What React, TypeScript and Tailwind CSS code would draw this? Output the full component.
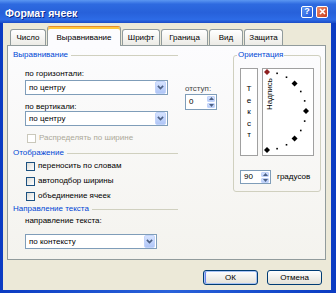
import React from "react";

function Chevron() {
  return (
    <svg width="7" height="5" viewBox="0 0 7 5">
      <path d="M0.9 0.9 L3.5 3.5 L6.1 0.9" fill="none" stroke="#4d6185" strokeWidth="1.7" />
    </svg>
  );
}

function Select({ value, w }: { value: string; w: string }) {
  return (
    <div className={`${w} h-[15px] bg-white border border-[#7f9db9] flex items-center`}>
      <span className="flex-1 pl-[3px] leading-[10px]">{value}</span>
      <div className="w-[11px] h-[13px] mr-px rounded-[2px] bg-gradient-to-b from-[#d6e3fe] to-[#b0c6f7] border border-[#c2d3fa] flex items-center justify-center">
        <Chevron />
      </div>
    </div>
  );
}

function Arrow({ up }: { up?: boolean }) {
  return (
    <svg width="5" height="3" viewBox="0 0 5 3">
      {up ? <path d="M0 3 L2.5 0 L5 3 Z" fill="#4d6185" /> : <path d="M0 0 L2.5 3 L5 0 Z" fill="#4d6185" />}
    </svg>
  );
}

function Spin({ value, w, h }: { value: string; w: string; h: string }) {
  return (
    <div className={`${w} ${h} bg-white border border-[#7f9db9] flex`}>
      <span className="flex-1 pl-[3px] flex items-center">{value}</span>
      <div className="w-[10px] flex flex-col p-px gap-px">
        <div className="flex-1 rounded-[1px] bg-gradient-to-b from-[#d6e3fe] to-[#b8cdf8] border border-[#c2d3fa] flex items-center justify-center">
          <Arrow up />
        </div>
        <div className="flex-1 rounded-[1px] bg-gradient-to-b from-[#d6e3fe] to-[#b8cdf8] border border-[#c2d3fa] flex items-center justify-center">
          <Arrow />
        </div>
      </div>
    </div>
  );
}

function Header({ label, mt }: { label: string; mt: string }) {
  return (
    <div className={`${mt} ml-[5px] w-[165px] h-[10px] flex items-center`}>
      <span className="text-[#0046d5] whitespace-nowrap">{label}</span>
      <div className="flex-1 h-px bg-[#d0d0bf] ml-[3px] mt-px" />
    </div>
  );
}

function Check({ label, mt, disabled }: { label: string; mt: string; disabled?: boolean }) {
  return (
    <div className={`${mt} ${disabled ? "ml-[19px]" : "ml-[18px]"} h-[10px] flex items-center`}>
      <span
        className={
          disabled
            ? "w-[9px] h-[9px] border border-[#cac8bb] bg-white"
            : "w-[9px] h-[9px] border border-[#1c5180] bg-gradient-to-br from-[#dcdcd7] to-white"
        }
      />
      <span className={`ml-[3px] whitespace-nowrap ${disabled ? "text-[#aca899]" : ""}`}>{label}</span>
    </div>
  );
}

function Tab({ label, w, active, ml }: { label: string; w: string; active?: boolean; ml: string }) {
  if (active) {
    return (
      <div
        className={`${w} ${ml} h-[20px] -mb-px relative z-10 bg-[#fcfcfe] border border-b-0 border-[#919b9c] border-t-[#e68b2c] rounded-t-[3px] shadow-[inset_0_2px_#ffc83c] flex items-center justify-center pt-[2px]`}
      >
        {label}
      </div>
    );
  }
  return (
    <div
      className={`${w} ${ml} h-[16px] border border-b-0 border-[#919b9c] rounded-t-[3px] bg-gradient-to-b from-white to-[#ecebe6] flex items-center justify-center`}
    >
      {label}
    </div>
  );
}

function Dial() {
  const angles = [90, 75, 60, 45, 30, 15, 0, -15, -30, -45, -60, -75, -90];
  return (
    <svg width="50" height="86" viewBox="0 0 50 86">
      {angles.map((a) => {
        const x = 4 + 39 * Math.cos((a * Math.PI) / 180);
        const y = 42 - 39 * Math.sin((a * Math.PI) / 180);
        if (a % 45 === 0) {
          const c = a === 90 ? "#8e1f1f" : "#000";
          return (
            <polygon
              key={a}
              points={`${x},${y - 3} ${x + 3},${y} ${x},${y + 3} ${x - 3},${y}`}
              fill={c}
            />
          );
        }
        return <rect key={a} x={x - 0.8} y={y - 0.8} width="1.6" height="1.6" fill="#000" />;
      })}
      <text
        transform="translate(9,41) rotate(-90)"
        fontSize="8"
        fontFamily="'Liberation Sans', Arial, sans-serif"
        fill="#000"
      >
        Надпись
      </text>
    </svg>
  );
}

export default function App() {
  return (
    <div className="w-[336px] h-[297px] bg-white overflow-hidden font-['Liberation_Sans',Arial,sans-serif] text-[8px] leading-[10px] text-black">
      <div className="w-[336px] h-[293px] bg-gradient-to-r from-[#0b3bc2] via-[#2a62da] to-[#0b3bc2] flex flex-col">
        {/* title bar */}
        <div className="h-[23px] flex items-center pl-[5px] pr-[8px] bg-[linear-gradient(180deg,#5b97f2_0%,#2e6ae0_18%,#2761da_55%,#2d6be6_85%,#1b4cc6_100%)]">
          <span className="flex-1 text-white font-bold text-[10.5px] leading-[12px] pt-[2px] [text-shadow:1px_1px_#0c2a8a]">
            Формат ячеек
          </span>
          <div className="w-[12px] h-[12px] rounded-[2px] border border-white bg-gradient-to-br from-[#5b93f5] to-[#1f56d8] flex items-center justify-center text-white font-bold text-[9px] leading-none">
            ?
          </div>
          <div className="ml-[3px] w-[12px] h-[12px] rounded-[2px] border border-white bg-gradient-to-br from-[#ec8a6a] to-[#c73d1c] flex items-center justify-center">
            <svg width="7" height="7" viewBox="0 0 7 7">
              <path d="M1 1 L6 6 M6 1 L1 6" stroke="#fff" strokeWidth="1.6" />
            </svg>
          </div>
        </div>
        {/* body */}
        <div className="ml-[3px] w-[328px] h-[267px] bg-[#ece9d8] flex flex-col">
          {/* tabs */}
          <div className="h-[22px] flex items-end">
            <Tab label="Число" w="w-[36px]" ml="ml-[7px]" />
            <Tab label="Выравнивание" w="w-[74px]" ml="ml-[1px]" active />
            <Tab label="Шрифт" w="w-[38px]" ml="ml-[1px]" />
            <Tab label="Граница" w="w-[47px]" ml="ml-[1px]" />
            <Tab label="Вид" w="w-[34px]" ml="ml-[1px]" />
            <Tab label="Защита" w="w-[39px]" ml="ml-[1px]" />
          </div>
          {/* panel */}
          <div className="ml-[4px] w-[319px] h-[215px] border border-[#919b9c] bg-gradient-to-b from-[#fcfcfe] to-[#f4f3ee] flex">
            <div className="w-[225px] flex flex-col">
              <Header label="Выравнивание" mt="mt-[4px]" />
              <div className="mt-[9px] flex">
                <div className="ml-[17px] w-[143px] flex flex-col">
                  <div className="h-[10px] whitespace-nowrap">по горизонтали:</div>
                  <div className="mt-[1px]">
                    <Select value="по центру" w="w-[143px]" />
                  </div>
                  <div className="mt-[7px] h-[10px] whitespace-nowrap">по вертикали:</div>
                  <div className="-mt-px">
                    <Select value="по центру" w="w-[143px]" />
                  </div>
                </div>
                <div className="ml-[17px] flex flex-col">
                  <div className="mt-[15px] h-[10px] text-[#444]">отступ:</div>
                  <Spin value="0" w="w-[32px]" h="h-[16px]" />
                </div>
              </div>
              <Check label="Распределять по ширине" mt="mt-[7px]" disabled />
              <Header label="Отображение" mt="mt-[5px]" />
              <Check label="переносить по словам" mt="mt-[3px]" />
              <Check label="автоподбор ширины" mt="mt-[5px]" />
              <Check label="объединение ячеек" mt="mt-[5px]" />
              <Header label="Направление текста" mt="mt-[3px]" />
              <div className="mt-[2px] ml-[17px] h-[10px] whitespace-nowrap">направление текста:</div>
              <div className="mt-[8px] ml-[17px]">
                <Select value="по контексту" w="w-[132px]" />
              </div>
            </div>
            <fieldset className="mt-[4px] w-[88px] h-[142px] border border-[#d0d0bf] rounded-[3px]">
              <legend className="ml-[3px] px-[1px] text-[#0046d5] leading-[10px]">Ориентация</legend>
              <div className="mt-[8px] ml-[6px] flex">
                <div className="w-[18px] h-[88px] bg-white border border-[#a0a0a0] flex flex-col items-center justify-center leading-[11.5px]">
                  <span>Т</span>
                  <span>е</span>
                  <span>к</span>
                  <span>с</span>
                  <span>т</span>
                </div>
                <div className="ml-[4px] w-[52px] h-[88px] bg-white border border-[#a0a0a0]">
                  <Dial />
                </div>
              </div>
              <div className="mt-[14px] ml-[6px] flex items-center">
                <Spin value="90" w="w-[31px]" h="h-[14px]" />
                <span className="ml-[6px]">градусов</span>
              </div>
            </fieldset>
          </div>
          {/* buttons */}
          <div className="mt-[10px] flex justify-end gap-[9px] pr-[9px]">
            <div className="w-[55px] h-[15px] rounded-[3px] border border-[#003c74] bg-gradient-to-b from-white to-[#e3e1d8] shadow-[inset_0_0_0_1px_#a8c3f4,inset_1px_0_0_1px_#6982ee] flex items-center justify-center">
              ОК
            </div>
            <div className="w-[55px] h-[15px] rounded-[3px] border border-[#003c74] bg-gradient-to-b from-white to-[#e3e1d8] flex items-center justify-center">
              Отмена
            </div>
          </div>
        </div>
      </div>
    </div>
  );
}
